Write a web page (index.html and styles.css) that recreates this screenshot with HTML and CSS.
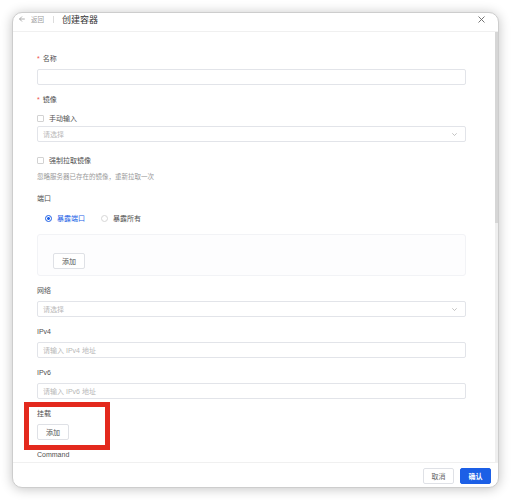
FILE: index.html
```html
<!DOCTYPE html>
<html lang="zh-CN">
<head>
    <meta charset="UTF-8">
    <meta name="viewport" content="width=device-width, initial-scale=1.0">
    <title>创建容器</title>
    <link rel="stylesheet" href="styles.css">
</head>
<body>
    <div class="drawer">
        <header class="drawer-header">
            <svg class="back-icon" width="6" height="6" viewBox="0 0 6 6">
                <path d="M5.8 3H0.5M3 0.5L0.5 3L3 5.5" fill="none" stroke="#9a9a9a" stroke-width="0.8"/>
            </svg>
            <span class="back-text">返回</span>
            <span class="divider"></span>
            <h1 class="title">创建容器</h1>
            <svg class="close-icon" width="7" height="7" viewBox="0 0 7 7">
                <path d="M0.5 0.5L6.5 6.5M6.5 0.5L0.5 6.5" stroke="#666" stroke-width="0.9"/>
            </svg>
        </header>

        <div class="drawer-body">
            <form class="form">
                <div class="form-item">
                    <label class="label required">名称</label>
                    <input class="input" type="text">
                </div>

                <div class="form-item">
                    <label class="label required">镜像</label>
                    <div class="check check-inline"><span class="box"></span>手动输入</div>
                    <div class="input select">
                        <span class="placeholder">请选择</span>
                        <svg class="chevron" width="5" height="3" viewBox="0 0 5 3"><path d="M0.3 0.3L2.5 2.5L4.7 0.3" fill="none" stroke="#aaa" stroke-width="0.7"/></svg>
                    </div>
                </div>

                <div class="form-item">
                    <div class="check check-force"><span class="box"></span>强制拉取镜像</div>
                    <p class="help">忽略服务器已存在的镜像，重新拉取一次</p>
                </div>

                <div class="form-item">
                    <label class="label">端口</label>
                    <div class="radio-group">
                        <span class="radio checked"><span class="dot"></span>暴露端口</span>
                        <span class="radio"><span class="dot"></span>暴露所有</span>
                    </div>
                    <div class="port-box">
                        <button type="button" class="btn">添加</button>
                    </div>
                </div>

                <div class="form-item">
                    <label class="label">网络</label>
                    <div class="input select">
                        <span class="placeholder">请选择</span>
                        <svg class="chevron" width="5" height="3" viewBox="0 0 5 3"><path d="M0.3 0.3L2.5 2.5L4.7 0.3" fill="none" stroke="#aaa" stroke-width="0.7"/></svg>
                    </div>
                </div>

                <div class="form-item">
                    <label class="label">IPv4</label>
                    <input class="input" type="text" placeholder="请输入 IPv4 地址">
                </div>

                <div class="form-item">
                    <label class="label">IPv6</label>
                    <input class="input" type="text" placeholder="请输入 IPv6 地址">
                </div>

                <div class="form-item">
                    <label class="label">挂载</label>
                    <button type="button" class="btn">添加</button>
                </div>

                <div class="form-item">
                    <label class="label">Command</label>
                    <input class="input" type="text">
                </div>
            </form>
            <div class="scrollbar"><div class="thumb"></div></div>
        </div>

        <footer class="drawer-footer">
            <button type="button" class="btn btn-cancel">取消</button>
            <button type="button" class="btn btn-primary">确认</button>
        </footer>

        <div class="highlight"></div>
    </div>
</body>
</html>
```

FILE: styles.css
```css
:root {
    --primary: #1c5fe6;
    --border: #e2e4e9;
    --text: #505050;
    --muted: #9a9a9a;
    --placeholder: #b8b8b8;
}

* {
    box-sizing: border-box;
}

body {
    margin: 0;
    padding: 12px;
    height: 500px;
    background: #fff;
    font-family: 'Liberation Sans', 'Noto Sans CJK SC', sans-serif;
    color: var(--text);
    overflow: hidden;
}

.drawer {
    position: relative;
    height: 476px;
    display: flex;
    flex-direction: column;
    background: #fff;
    border: 1px solid #cdcdcd;
    border-radius: 10px;
    box-shadow: 0 1px 12px rgba(0, 0, 0, 0.24);
    overflow: hidden;
}

/* header */
.drawer-header {
    height: 19px;
    flex-shrink: 0;
    display: flex;
    align-items: center;
    padding: 0 13px 6px 6px;
    border-bottom: 1px solid #f0f0f0;
}

.back-icon {
    margin-right: 6px;
}

.back-text {
    font-size: 6.5px;
    color: var(--muted);
}

.divider {
    width: 1px;
    height: 7px;
    background: #dcdcdc;
    margin: 0 8px 0 9px;
}

.title {
    margin: 0;
    font-size: 9px;
    font-weight: 400;
    color: #333;
    flex: 1;
}

/* body */
.drawer-body {
    position: relative;
    flex: 1;
    overflow: hidden;
}

.form {
    padding: 22px 32px 0 24px;
}

.form-item {
    display: flex;
    flex-direction: column;
    margin-bottom: 10px;
}

.label {
    display: block;
    font-size: 7px;
    line-height: 10px;
    margin-bottom: 5px;
    color: var(--text);
}

.label.required::before {
    content: "*";
    color: #f0504a;
    margin-right: 3px;
}

.input {
    display: block;
    width: 100%;
    height: 16px;
    flex-shrink: 0;
    border: 1px solid var(--border);
    border-radius: 2px;
    padding: 0 5px;
    font-family: inherit;
    font-size: 7px;
    color: var(--text);
    background: #fff;
    outline: none;
}

.input::placeholder,
.placeholder {
    color: var(--placeholder);
}

.select {
    display: flex;
    align-items: center;
    justify-content: space-between;
    padding-right: 8px;
}

.check {
    display: flex;
    align-items: center;
    height: 10px;
    font-size: 7px;
    color: var(--text);
}

.check-inline {
    margin: 3px 0;
}

.check-force {
    margin-top: 3px;
}

.check .box {
    width: 7px;
    height: 7px;
    border: 1px solid #d2d2d2;
    border-radius: 1px;
    margin-right: 5px;
}

.help {
    margin: 7px 0 3px;
    font-size: 6.5px;
    line-height: 9px;
    color: var(--muted);
}

.radio-group {
    display: flex;
    align-items: center;
    gap: 16px;
    height: 10px;
    margin-top: 4px;
    padding-left: 8px;
    font-size: 7px;
}

.radio {
    display: flex;
    align-items: center;
    gap: 5px;
    color: var(--text);
}

.radio .dot {
    width: 7px;
    height: 7px;
    border-radius: 50%;
    border: 1px solid #d6d6d6;
}

.radio.checked {
    color: var(--primary);
}

.radio.checked .dot {
    border: 1.5px solid var(--primary);
    background: radial-gradient(circle, var(--primary) 0 1.2px, #fff 1.6px);
}

.port-box {
    margin-top: 11px;
    height: 42px;
    padding: 15px 15px 0;
    border: 1px solid #f2f3f6;
    border-radius: 3px;
    background: #fdfdfe;
}

.btn {
    height: 16px;
    width: 32px;
    padding: 0;
    border: 1px solid #dfe1e6;
    border-radius: 2px;
    background: #fff;
    font-family: inherit;
    font-size: 7px;
    color: #555;
    cursor: pointer;
}

.scrollbar {
    position: absolute;
    top: 0;
    right: 0;
    bottom: 0;
    width: 3px;
    background: #efefef;
}

.thumb {
    height: 191px;
    background: #d6d6d6;
}

/* footer */
.drawer-footer {
    height: 25px;
    flex-shrink: 0;
    display: flex;
    justify-content: flex-end;
    align-items: flex-start;
    gap: 6px;
    padding: 5px 7px 0;
    border-top: 1px solid #f0f0f0;
}

.btn-cancel {
    width: 31px;
    color: #666;
}

.btn-primary {
    width: 31px;
    border-color: var(--primary);
    background: var(--primary);
    color: #fff;
    font-weight: 700;
}

/* red annotation frame */
.highlight {
    position: absolute;
    left: 11px;
    top: 389px;
    width: 86px;
    height: 48px;
    border: 5px solid #e3291d;
}
```
